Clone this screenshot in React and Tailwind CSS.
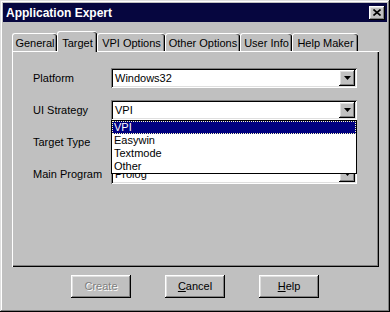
import React from "react";

const tabs = [
  { name: "General", w: "w-[45px]" },
  { name: "Target", w: "w-[40px]", active: true },
  { name: "VPI Options", w: "w-[68px]" },
  { name: "Other Options", w: "w-[75px]" },
  { name: "User Info", w: "w-[52px]" },
  { name: "Help Maker", w: "w-[66px]" },
];

const fields = [
  { label: "Platform", value: "Windows32" },
  { label: "UI Strategy", value: "VPI", open: true },
  { label: "Target Type", value: "" },
  { label: "Main Program", value: "Prolog" },
];

const options = ["VPI", "Easywin", "Textmode", "Other"];

const raised =
  "shadow-[inset_-1px_-1px_#000,inset_1px_1px_#fff,inset_-2px_-2px_#808080,inset_2px_2px_#dfdfdf]";

const Arrow = () => (
  <svg width="7" height="4" viewBox="0 0 7 4">
    <polygon points="0,0 7,0 3.5,4" fill="#000" />
  </svg>
);

const Combo = ({ value, open }) => (
  <div className="relative">
    <div className="h-[20px] w-[246px] bg-white flex items-center shadow-[inset_1px_1px_#808080,inset_-1px_-1px_#fff,inset_2px_2px_#000,inset_-2px_-2px_#dfdfdf] p-[2px]">
      <span className="flex-1 pl-[2px] leading-none">{value}</span>
      <div className={`w-[16px] h-[16px] bg-[#c0c0c0] flex items-center justify-center ${raised}`}>
        <Arrow />
      </div>
    </div>
    {open && (
      <div className="absolute left-0 top-full z-10 w-[246px] bg-white border border-black">
        {options.map((o, i) => (
          <div
            key={o}
            className={
              i === 0
                ? "h-[13px] leading-[11px] pl-[1px] bg-[#000080] text-white border border-dotted border-[#ffffc0]"
                : "h-[13px] leading-[13px] pl-[2px]"
            }
          >
            {o}
          </div>
        ))}
      </div>
    )}
  </div>
);

const Button = ({ children, disabled }) => (
  <div
    className={`w-[60px] h-[23px] flex items-center justify-center bg-[#c0c0c0] ${raised} ${
      disabled ? "text-[#808080] [text-shadow:1px_1px_0_#fff]" : ""
    }`}
  >
    {children}
  </div>
);

export default function App() {
  return (
    <div className="w-[390px] h-[312px] bg-[#c0c0c0] p-[3px] flex flex-col font-['Liberation_Sans',Arial,sans-serif] text-[11px] text-black shadow-[inset_-1px_-1px_#000,inset_1px_1px_#dfdfdf,inset_-2px_-2px_#808080,inset_2px_2px_#fff]">
      {/* title bar */}
      <div className="h-[19px] bg-[#06063f] flex items-center justify-between pl-[3px] pr-[2px]">
        <span className="text-white font-bold text-[12px]">Application Expert</span>
        <div className={`w-[16px] h-[14px] bg-[#c0c0c0] flex items-center justify-center ${raised}`}>
          <svg width="8" height="7" viewBox="0 0 8 7">
            <path d="M0.5 0.5 L7.5 6.5 M7.5 0.5 L0.5 6.5" stroke="#000" strokeWidth="1.6" />
          </svg>
        </div>
      </div>

      <div className="mt-[9px] ml-[9px] w-[367px]">
        {/* tabs */}
        <div className="flex items-end h-[20px]">
          {tabs.map((t) => (
            <div
              key={t.name}
              className={`${t.w} flex justify-center bg-[#c0c0c0] border-l border-t border-white rounded-t-[3px] shadow-[inset_-1px_0_#000,inset_-2px_0_#808080] ${
                t.active
                  ? "h-[21px] -mb-px relative z-10 items-start pt-[3px]"
                  : "h-[18px] items-center pt-px"
              }`}
            >
              {t.name}
            </div>
          ))}
        </div>

        {/* panel */}
        <div className="h-[216px] border-l border-t border-white shadow-[inset_-1px_-1px_#000,inset_-2px_-2px_#808080] pt-[16px] pl-[20px]">
          <div className="flex flex-col gap-[12px]">
            {fields.map((f) => (
              <div key={f.label} className={`flex items-center ${f.open ? "relative z-10" : ""}`}>
                <span className="w-[78px]">{f.label}</span>
                <Combo value={f.value} open={f.open} />
              </div>
            ))}
          </div>
        </div>
      </div>

      {/* buttons */}
      <div className="mt-[8px] flex justify-center gap-[34px]">
        <Button disabled>Create</Button>
        <Button>
          <span>
            <span className="underline">C</span>ancel
          </span>
        </Button>
        <Button>
          <span>
            <span className="underline">H</span>elp
          </span>
        </Button>
      </div>
    </div>
  );
}
